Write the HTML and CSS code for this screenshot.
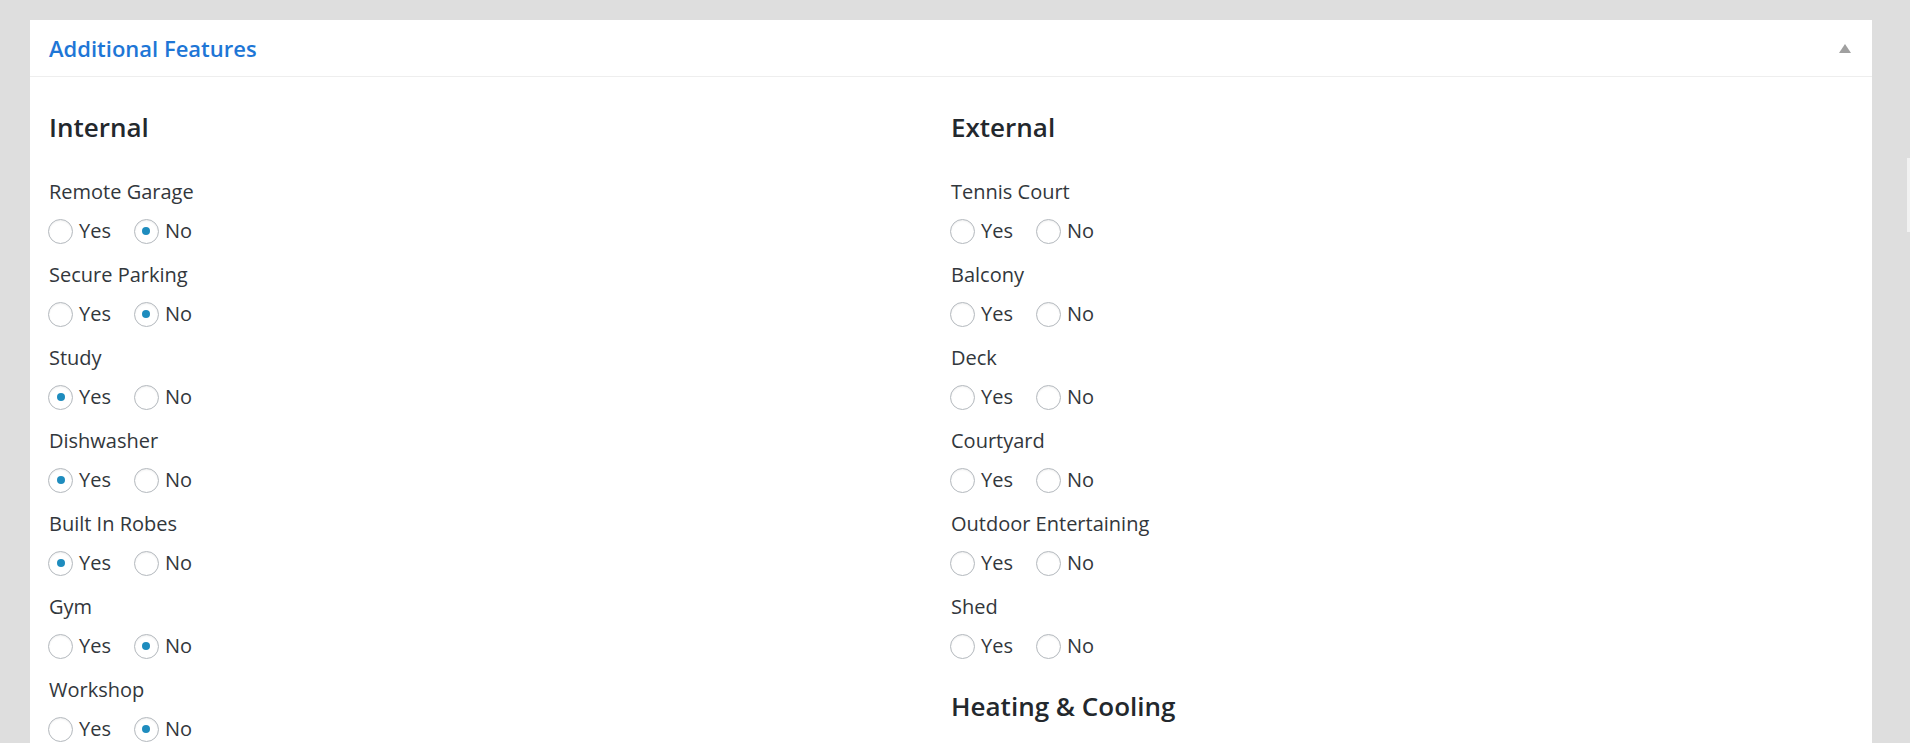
FILE: index.html
```html
<!DOCTYPE html>
<html lang="en">
<head>
  <meta charset="UTF-8">
  <meta name="viewport" content="width=device-width, initial-scale=1.0">
  <title>Additional Features</title>
  <link rel="stylesheet" href="styles.css">
</head>
<body>
  <div class="panel">
    <div class="panel-header">
      <h2 class="panel-title">Additional Features</h2>
      <span class="toggle"></span>
    </div>

    <div class="panel-body">
      <div class="column">
        <div class="section">
          <h3>Internal</h3>

          <div class="field">
            <label class="field-label">Remote Garage</label>
            <div class="choices">
              <label><input type="radio" name="remote_garage"> Yes</label>
              <label><input type="radio" name="remote_garage" checked> No</label>
            </div>
          </div>

          <div class="field">
            <label class="field-label">Secure Parking</label>
            <div class="choices">
              <label><input type="radio" name="secure_parking"> Yes</label>
              <label><input type="radio" name="secure_parking" checked> No</label>
            </div>
          </div>

          <div class="field">
            <label class="field-label">Study</label>
            <div class="choices">
              <label><input type="radio" name="study" checked> Yes</label>
              <label><input type="radio" name="study"> No</label>
            </div>
          </div>

          <div class="field">
            <label class="field-label">Dishwasher</label>
            <div class="choices">
              <label><input type="radio" name="dishwasher" checked> Yes</label>
              <label><input type="radio" name="dishwasher"> No</label>
            </div>
          </div>

          <div class="field">
            <label class="field-label">Built In Robes</label>
            <div class="choices">
              <label><input type="radio" name="built_in_robes" checked> Yes</label>
              <label><input type="radio" name="built_in_robes"> No</label>
            </div>
          </div>

          <div class="field">
            <label class="field-label">Gym</label>
            <div class="choices">
              <label><input type="radio" name="gym"> Yes</label>
              <label><input type="radio" name="gym" checked> No</label>
            </div>
          </div>

          <div class="field">
            <label class="field-label">Workshop</label>
            <div class="choices">
              <label><input type="radio" name="workshop"> Yes</label>
              <label><input type="radio" name="workshop" checked> No</label>
            </div>
          </div>
        </div>
      </div>

      <div class="column">
        <div class="section">
          <h3>External</h3>

          <div class="field">
            <label class="field-label">Tennis Court</label>
            <div class="choices">
              <label><input type="radio" name="tennis_court"> Yes</label>
              <label><input type="radio" name="tennis_court"> No</label>
            </div>
          </div>

          <div class="field">
            <label class="field-label">Balcony</label>
            <div class="choices">
              <label><input type="radio" name="balcony"> Yes</label>
              <label><input type="radio" name="balcony"> No</label>
            </div>
          </div>

          <div class="field">
            <label class="field-label">Deck</label>
            <div class="choices">
              <label><input type="radio" name="deck"> Yes</label>
              <label><input type="radio" name="deck"> No</label>
            </div>
          </div>

          <div class="field">
            <label class="field-label">Courtyard</label>
            <div class="choices">
              <label><input type="radio" name="courtyard"> Yes</label>
              <label><input type="radio" name="courtyard"> No</label>
            </div>
          </div>

          <div class="field">
            <label class="field-label">Outdoor Entertaining</label>
            <div class="choices">
              <label><input type="radio" name="outdoor_entertaining"> Yes</label>
              <label><input type="radio" name="outdoor_entertaining"> No</label>
            </div>
          </div>

          <div class="field">
            <label class="field-label">Shed</label>
            <div class="choices">
              <label><input type="radio" name="shed"> Yes</label>
              <label><input type="radio" name="shed"> No</label>
            </div>
          </div>
        </div>

        <div class="section">
          <h3>Heating &amp; Cooling</h3>
        </div>
      </div>
    </div>
  </div>

  <div class="scroll-thumb"></div>
</body>
</html>
```

FILE: styles.css
```css
html, body {
  margin: 0;
  height: 100%;
  overflow: hidden;
}
body {
  background-color: #dedede;
  font-family: "Open Sans", "Liberation Sans", sans-serif;
  color: #32373c;
  padding: 20px 38px 0 30px;
  box-sizing: border-box;
}
.panel {
  background-color: #fff;
}
.panel-header {
  display: flex;
  align-items: center;
  justify-content: space-between;
  height: 56px;
  padding: 0 21px 0 19px;
  border-bottom: 1px solid #eeeeee;
}
.panel-title {
  margin: 0;
  font-size: 22px;
  font-weight: 600;
  color: #1e76d6;
}
.toggle {
  width: 0;
  height: 0;
  border-left: 6px solid transparent;
  border-right: 6px solid transparent;
  border-bottom: 9px solid #a0a0a0;
}
.panel-body {
  display: grid;
  grid-template-columns: 1fr 1fr;
  padding: 32px 19px 0 19px;
}
.section + .section {
  margin-top: 28px;
}
h3 {
  margin: 0 0 33px 0;
  font-size: 26px;
  font-weight: 600;
  line-height: 36px;
  color: #23282d;
}
.field {
  margin-bottom: 16px;
}
.field-label {
  display: block;
  font-size: 20px;
  line-height: 28px;
  margin-bottom: 11px;
}
.choices {
  display: flex;
  gap: 24px;
  font-size: 20px;
  line-height: 28px;
}
.choices label {
  display: flex;
  align-items: center;
  gap: 6px;
}
input[type="radio"] {
  -webkit-appearance: none;
  appearance: none;
  margin: 0 0 0 -1px;
  width: 25px;
  height: 25px;
  border: 1px solid #b4b9be;
  border-radius: 50%;
  background-color: #fff;
  box-shadow: inset 0 1px 2px rgba(0, 0, 0, 0.07);
  display: flex;
  align-items: center;
  justify-content: center;
}
input[type="radio"]:checked::before {
  content: "";
  width: 8px;
  height: 8px;
  border-radius: 50%;
  background-color: #1e8cbe;
}
.scroll-thumb {
  position: fixed;
  right: 0;
  top: 158px;
  width: 3px;
  height: 74px;
  background-color: #f2f2f2;
}
```
